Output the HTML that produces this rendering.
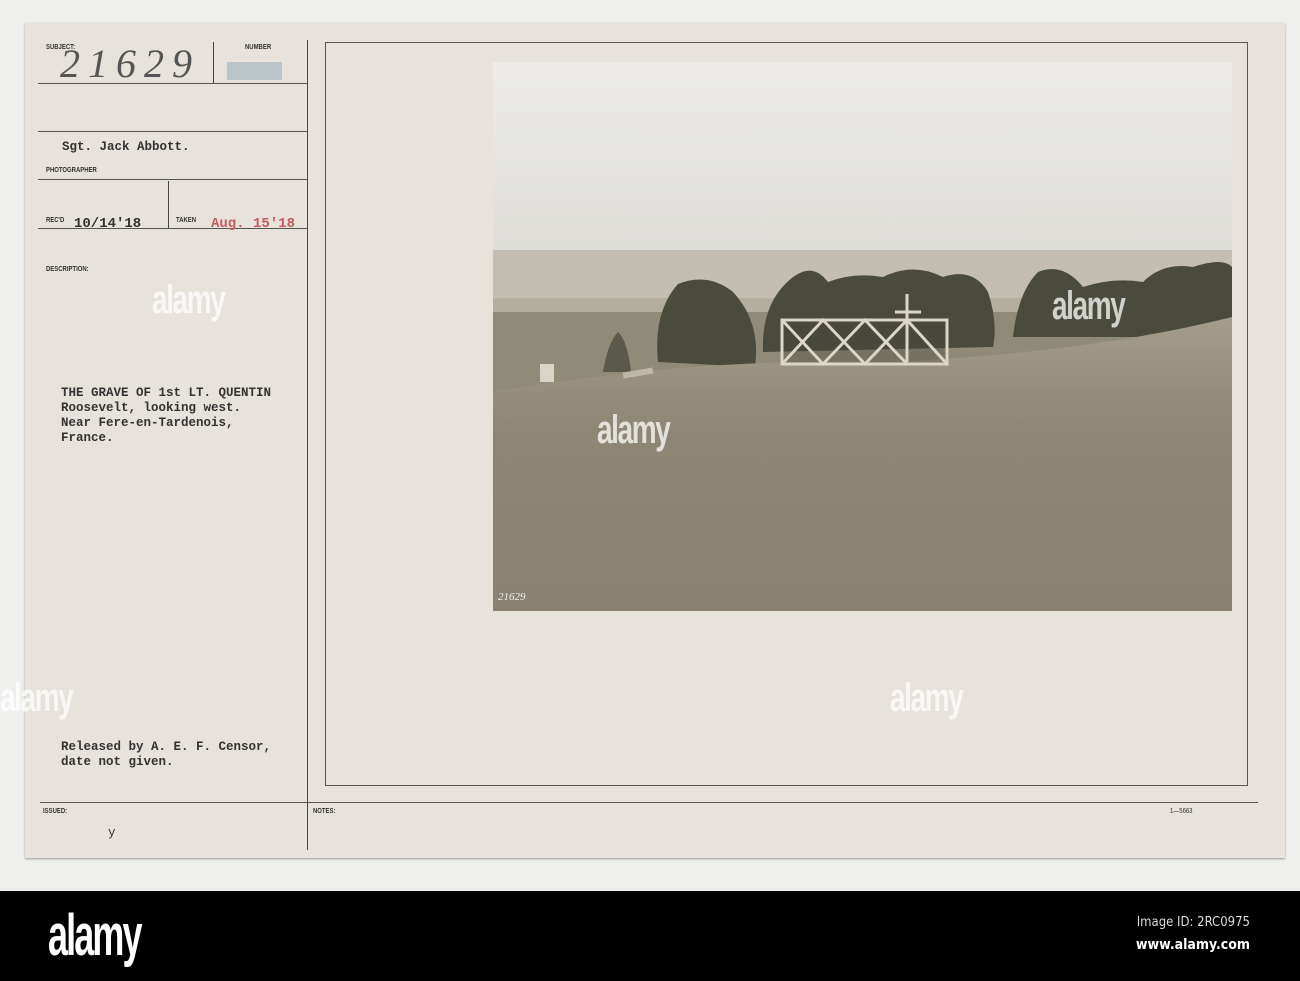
<!DOCTYPE html>
<html><head><style>
body{margin:0;width:1300px;height:981px;background:#efefed;position:relative;overflow:hidden;font-family:"Liberation Mono",monospace}
.a{position:absolute}
.card{left:25px;top:23px;width:1260px;height:835px;background:#e7e3dc;box-shadow:0 1px 2px #999}
.hl{position:absolute;height:1px;background:#555}
.vl{position:absolute;width:1px;background:#444}
.lab{position:absolute;font-family:"Liberation Sans",sans-serif;font-size:7px;color:#333;font-weight:bold;transform:scaleX(.85);transform-origin:left}
.ty{position:absolute;font-size:12.5px;color:#333;line-height:15px;font-weight:bold}
.wm{position:absolute;color:rgba(255,255,255,.75);font-family:"Liberation Sans",sans-serif;font-weight:bold;font-size:40px;letter-spacing:-2px;transform:scaleX(.7);transform-origin:left}
</style></head><body>
<div class="a card"></div>
<div class="hl" style="left:38px;top:83px;width:269px"></div>
<div class="hl" style="left:38px;top:131px;width:269px"></div>
<div class="hl" style="left:38px;top:179px;width:269px"></div>
<div class="hl" style="left:38px;top:228px;width:269px"></div>
<div class="vl" style="left:213px;top:42px;height:41px"></div>
<div class="vl" style="left:168px;top:181px;height:47px"></div>
<div class="vl" style="left:307px;top:40px;height:810px"></div>
<div class="a" style="left:325px;top:42px;width:921px;height:742px;border:1px solid #555"></div>
<div class="hl" style="left:40px;top:802px;width:1218px"></div>
<div class="lab" style="left:46px;top:44px">SUBJECT:</div>
<div class="lab" style="left:245px;top:44px">NUMBER</div>
<div class="a" style="left:60px;top:40px;font-family:'Liberation Serif',serif;font-style:italic;font-size:40px;color:#555;letter-spacing:8px">21629</div>
<div class="a" style="left:227px;top:62px;width:55px;height:18px;background:#a8b8c0;opacity:.7"></div>
<div class="ty" style="left:62px;top:140px">Sgt. Jack Abbott.</div>
<div class="lab" style="left:46px;top:167px">PHOTOGRAPHER</div>
<div class="lab" style="left:46px;top:217px">REC'D</div>
<div class="ty" style="left:74px;top:217px;font-size:14px">10/14'18</div>
<div class="lab" style="left:176px;top:217px">TAKEN</div>
<div class="ty" style="left:211px;top:217px;color:#c65a60;font-size:14px">Aug. 15'18</div>
<div class="lab" style="left:46px;top:266px">DESCRIPTION:</div>
<div class="ty" style="left:61px;top:386px">THE GRAVE OF 1st LT. QUENTIN<br>Roosevelt, looking west.<br>Near Fere-en-Tardenois,<br>France.</div>
<div class="ty" style="left:61px;top:740px">Released by A. E. F. Censor,<br>date not given.</div>
<div class="lab" style="left:43px;top:808px">ISSUED:</div>
<div class="lab" style="left:313px;top:808px">NOTES:</div>
<div class="lab" style="left:1170px;top:808px;font-weight:normal">1—5663</div>
<div class="ty" style="left:108px;top:826px;font-weight:normal">y</div>
<svg class="a" style="left:493px;top:62px" width="739" height="549" viewBox="0 0 739 549">
<defs><linearGradient id="sky" x1="0" y1="0" x2="0" y2="1"><stop offset="0" stop-color="#ecebe8"/><stop offset="1" stop-color="#deddd8"/></linearGradient>
<linearGradient id="gr" x1="0" y1="0" x2="0" y2="1"><stop offset="0" stop-color="#a59d8b"/><stop offset=".4" stop-color="#8e8674"/><stop offset="1" stop-color="#8a8170"/></linearGradient></defs>
<rect width="739" height="190" fill="url(#sky)"/>
<rect y="188" width="739" height="60" fill="#c4beb2"/>
<path d="M0 236 L739 236 L739 300 L0 330Z" fill="#908a78"/>
<path d="M0 236 L739 236 L739 250 L0 250Z" fill="#b4ae9f"/>
<g fill="#4a4a3d">
<path d="M165 300 Q160 250 185 222 Q215 210 240 230 Q268 260 262 305Z"/>
<path d="M270 290 Q268 240 300 215 Q320 200 335 220 Q360 210 390 215 Q420 200 450 215 Q480 205 495 230 Q505 260 500 285Z"/>
<path d="M520 275 Q525 230 545 210 Q570 200 590 225 Q620 215 650 220 Q670 200 700 205 Q730 195 739 205 L739 275Z"/>
<path d="M110 310 Q115 280 125 270 Q135 280 138 310Z" fill="#5a594b"/>
</g>
<path d="M0 330 Q200 295 400 300 Q600 290 739 255 L739 549 L0 549Z" fill="url(#gr)"/>
<g stroke="#dcd6c9" stroke-width="3" fill="none">
<rect x="289" y="258" width="165" height="44" fill="rgba(70,70,60,.35)"/>
<path d="M289 302 L330 258 L372 302 L414 258 L454 302 M289 258 L330 302 L372 258 L414 302"/>
<path d="M414 232 V300 M402 250 H428"/>
</g>
<rect x="47" y="302" width="14" height="18" fill="#d9d4c8"/>
<rect x="130" y="308" width="30" height="6" fill="#bfb8a8" transform="rotate(-10 145 311)"/>
<text x="5" y="538" font-size="11" fill="#eee" font-family="Liberation Serif" font-style="italic">21629</text>
</svg>
<div class="wm" style="left:152px;top:278px">alamy</div>
<div class="wm" style="left:597px;top:408px">alamy</div>
<div class="wm" style="left:1052px;top:284px">alamy</div>
<div class="wm" style="left:0;top:676px">alamy</div>
<div class="wm" style="left:890px;top:676px">alamy</div>
<div class="a" style="left:0;top:891px;width:1300px;height:90px;background:#000"></div>
<div class="a" style="left:48px;top:902px;color:#fff;font-family:'Liberation Sans',sans-serif;font-weight:bold;font-size:58px;letter-spacing:-3px;transform:scaleX(.62);transform-origin:left">alamy</div>
<div class="a" style="right:50px;top:912px;color:#ddd;font-family:'DejaVu Sans Condensed','Liberation Sans',sans-serif;font-size:13px;text-align:right;line-height:22px">Image ID: 2RC0975<br><b style="color:#fff;font-size:14px">www.alamy.com</b></div>
</body></html>
